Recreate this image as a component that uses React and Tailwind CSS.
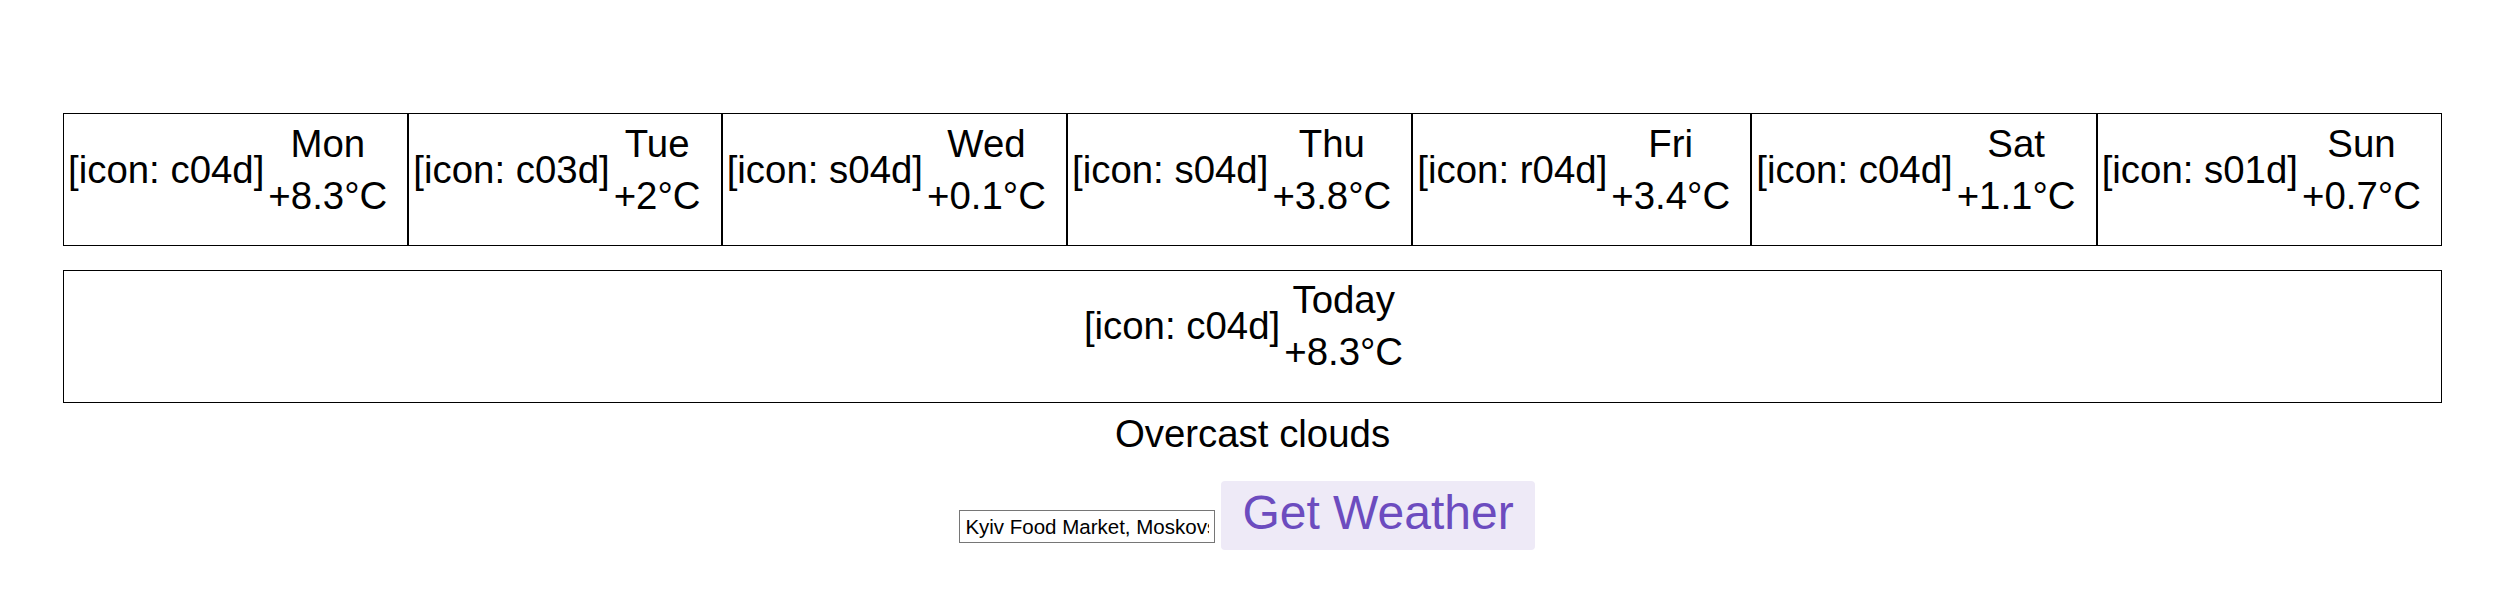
import React from 'react';

const forecast = [
  { icon: 'c04d', day: 'Mon', temp: '+8.3°C' },
  { icon: 'c03d', day: 'Tue', temp: '+2°C' },
  { icon: 's04d', day: 'Wed', temp: '+0.1°C' },
  { icon: 's04d', day: 'Thu', temp: '+3.8°C' },
  { icon: 'r04d', day: 'Fri', temp: '+3.4°C' },
  { icon: 'c04d', day: 'Sat', temp: '+1.1°C' },
  { icon: 's01d', day: 'Sun', temp: '+0.7°C' },
];

// icon placeholder + day / temperature stack
const DayInfo = ({ icon, day, temp }) => (
  <div className="flex items-center">
    <span className="whitespace-nowrap">[icon: {icon}]</span>
    <div className="flex flex-col text-center ml-[4px] pr-[18px]">
      <span>{day}</span>
      <span className="whitespace-nowrap">{temp}</span>
    </div>
  </div>
);

const App = () => {
  return (
    <div className="min-h-[596px] bg-white text-black font-['Liberation_Sans',Arial,sans-serif] text-[38.4px] leading-[52px]">
      <div className="pt-[113px] ml-[63px] mr-[67px]">
        {/* forecast row */}
        <div className="flex">
          {forecast.map((d) => (
            <div
              key={d.day}
              className="flex-auto flex items-start h-[133px] border border-black pl-[4px] pt-[4px]"
            >
              <DayInfo {...d} />
            </div>
          ))}
        </div>

        {/* today */}
        <div className="mt-[24px] flex justify-center items-start h-[133px] border border-black pt-[3px]">
          <DayInfo icon="c04d" day="Today" temp="+8.3°C" />
        </div>

        <div className="mt-[5px] text-center">Overcast clouds</div>

        <div className="mt-[21px] flex justify-center items-start gap-[6px] pr-[11px]">
          <input
            type="text"
            defaultValue="Kyiv Food Market, Moskovskyi Avenue, Kyiv"
            className="mt-[29px] w-[256px] h-[33px] border border-[#767676] px-[5px] text-[20.5px] leading-none text-black font-['Liberation_Sans',Arial,sans-serif] outline-none"
          />
          <button className="h-[69px] px-[21px] pb-[6px] flex items-center rounded-[4px] bg-[#eeeaf7] text-[#6c4cbf] text-[48px] leading-none font-['Liberation_Sans',Arial,sans-serif]">
            Get Weather
          </button>
        </div>
      </div>
    </div>
  );
};

export default App;
